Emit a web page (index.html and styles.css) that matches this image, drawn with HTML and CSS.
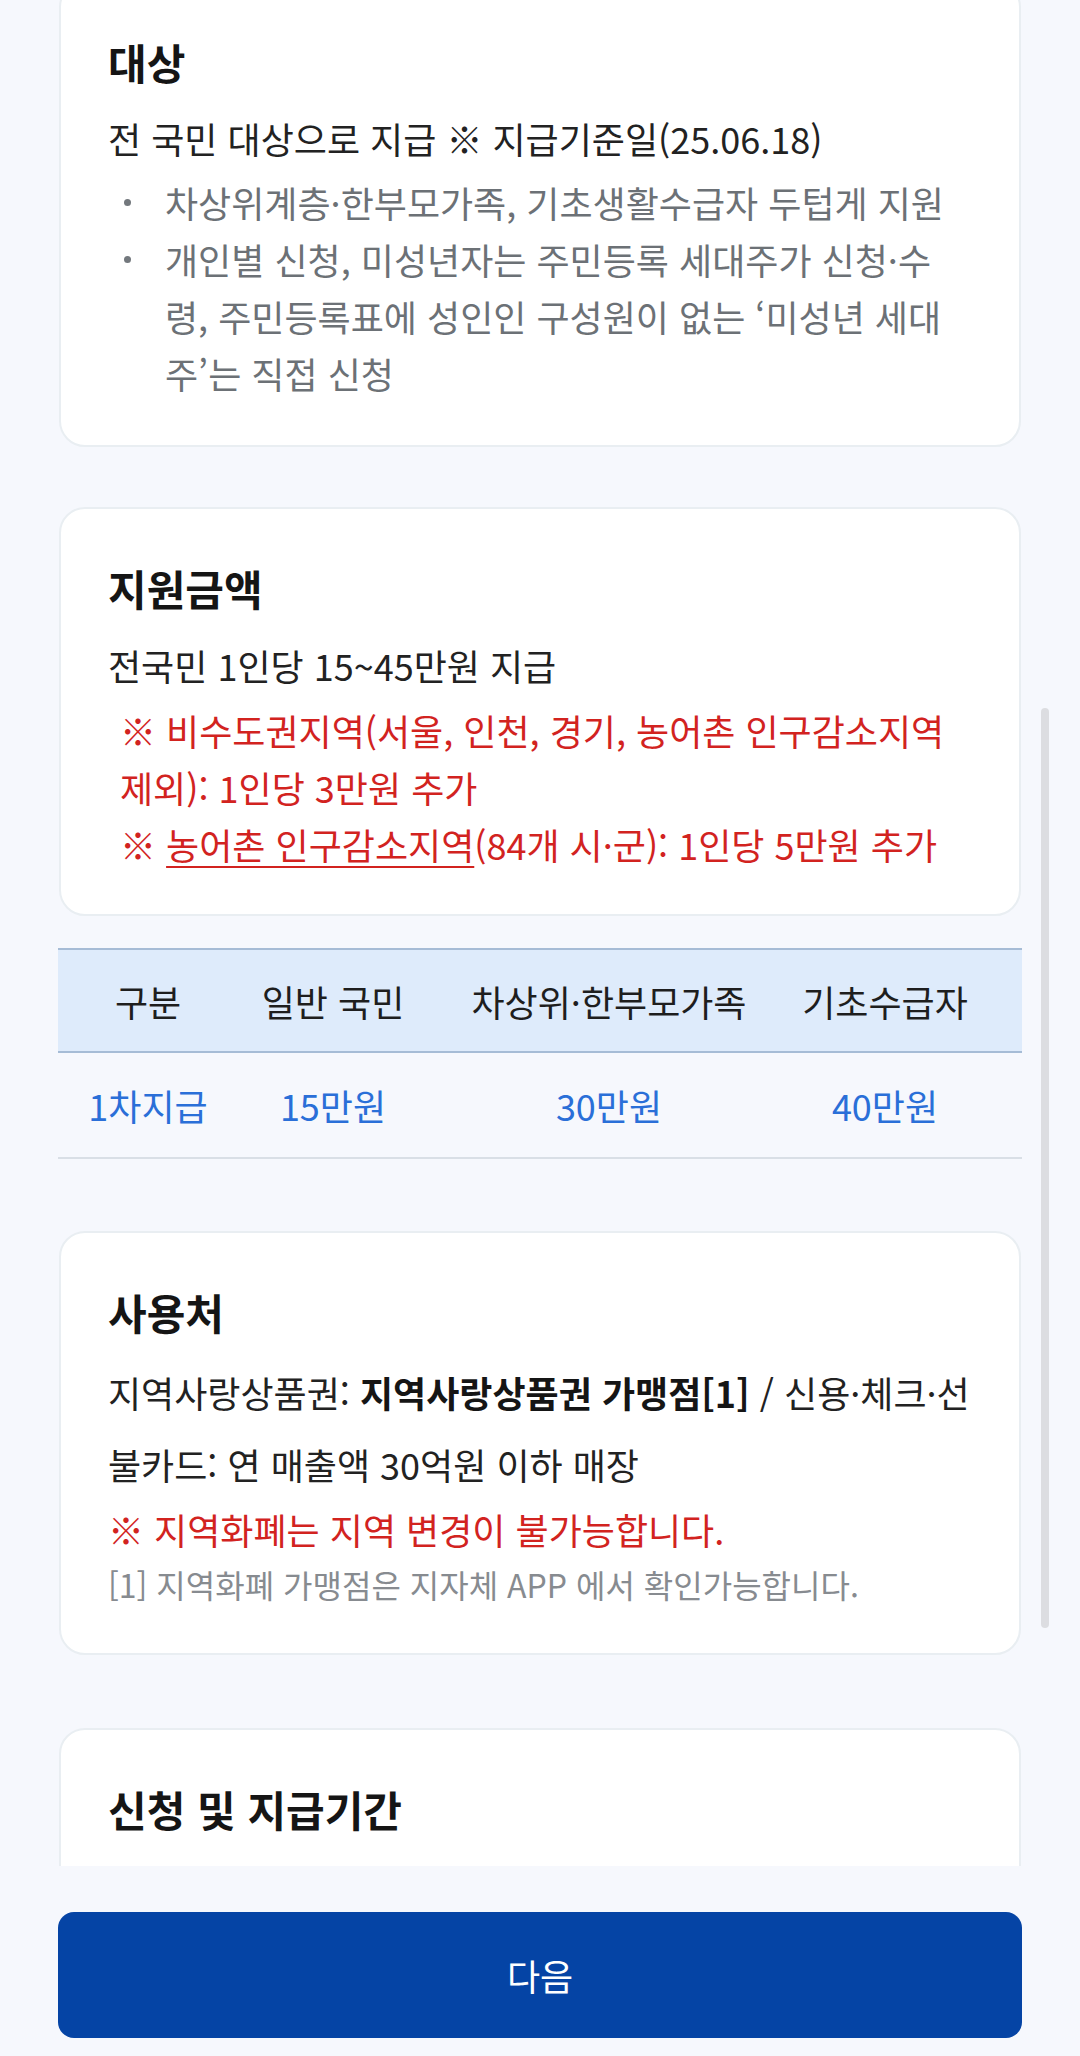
FILE: index.html
```html
<!DOCTYPE html>
<html lang="ko">
<head>
<meta charset="utf-8">
<title>지원 안내</title>
<link rel="stylesheet" href="styles.css">
</head>
<body>
<div class="screen">
  <div class="viewport">
    <div class="content">
      <section class="card card-first">
        <h2 class="card-title">대상</h2>
        <p class="text text-lead">전 국민 대상으로 지급 ※ 지급기준일(25.06.18)</p>
        <ul class="bullets">
          <li>차상위계층·한부모가족, 기초생활수급자 두텁게 지원</li>
          <li>개인별 신청, 미성년자는 주민등록 세대주가 신청·수령, 주민등록표에 성인인 구성원이 없는 ‘미성년 세대주’는 직접 신청</li>
        </ul>
      </section>

      <section class="card card-amount">
        <h2 class="card-title">지원금액</h2>
        <p class="text text-lead">전국민 1인당 15~45만원 지급</p>
        <div class="notes">
          <p class="note">※ 비수도권지역(서울, 인천, 경기, 농어촌 인구감소지역 제외): 1인당 3만원 추가</p>
          <p class="note">※ <span class="underline">농어촌 인구감소지역</span>(84개 시·군): 1인당 5만원 추가</p>
        </div>
      </section>

      <div class="table">
        <div class="row row-head">
          <div class="cell">구분</div>
          <div class="cell">일반 국민</div>
          <div class="cell">차상위·한부모가족</div>
          <div class="cell">기초수급자</div>
        </div>
        <div class="row row-data">
          <div class="cell">1차지급</div>
          <div class="cell">15만원</div>
          <div class="cell">30만원</div>
          <div class="cell">40만원</div>
        </div>
      </div>

      <section class="card card-use">
        <h2 class="card-title">사용처</h2>
        <p class="text text-use">지역사랑상품권: <strong>지역사랑상품권 가맹점[1]</strong> / 신용·체크·선불카드: 연 매출액 30억원 이하 매장</p>
        <p class="warn">※ 지역화폐는 지역 변경이 불가능합니다.</p>
        <p class="foot">[1] 지역화폐 가맹점은 지자체 APP 에서 확인가능합니다.</p>
      </section>

      <section class="card card-period">
        <h2 class="card-title">신청 및 지급기간</h2>
      </section>
    </div>
    <div class="scrollbar"></div>
  </div>
  <div class="footer">
    <button class="next-btn" type="button">다음</button>
  </div>
</div>
</body>
</html>
```

FILE: styles.css
```css
* {
  box-sizing: border-box;
}

html, body {
  margin: 0;
  padding: 0;
  background: #f6f8fd;
}

body {
  font-family: "Noto Sans CJK KR", "Noto Sans", sans-serif;
  color: #1f1f1f;
}

.screen {
  width: 1080px;
  height: 2056px;
  display: flex;
  flex-direction: column;
  background: #f6f8fd;
}

.viewport {
  position: relative;
  height: 1866px;
  overflow: hidden;
  flex: none;
}

.content {
  margin-top: -19px;
  padding: 0 58px;
  display: flex;
  flex-direction: column;
}

.card {
  margin: 0 1px;
  background: #ffffff;
  border: 2px solid #e9eef2;
  border-radius: 26px;
  padding: 55px 50px 43px 47px;
  display: flex;
  flex-direction: column;
}

.card-amount {
  margin-top: 60px;
  padding-bottom: 41px;
}

.card-use {
  margin-top: 72px;
  padding-right: 40px;
}

.card-period {
  margin-top: 73px;
  padding-bottom: 200px;
}

.card-title {
  margin: 0;
  font-size: 42px;
  line-height: 48px;
  font-weight: 700;
  color: #151515;
}

.text {
  margin: 0;
  font-size: 36px;
  line-height: 57px;
  color: #222222;
}

.text-lead {
  margin-top: 24px;
}

.card-amount .text-lead {
  margin-top: 25px;
}

.bullets {
  list-style: none;
  margin: 7px 0 0 0;
  padding: 0;
}

.bullets li {
  display: grid;
  grid-template-columns: 57px 1fr;
  font-size: 36px;
  line-height: 57px;
  color: #6c7176;
}

.bullets li::before {
  content: "";
  width: 7px;
  height: 7px;
  border-radius: 50%;
  background: #73787d;
  margin: 25px 0 0 16px;
}

.notes {
  margin-top: 8px;
  padding-left: 12px;
}

.note {
  margin: 0;
  font-size: 36px;
  line-height: 57px;
  color: #d2231f;
}

.underline {
  text-decoration: underline;
  text-decoration-thickness: 2px;
  text-underline-offset: 6px;
}

.table {
  margin-top: 32px;
  display: flex;
  flex-direction: column;
}

.row {
  display: grid;
  grid-template-columns: 180px 190px 362px 190px;
  padding-right: 42px;
  align-items: center;
  font-size: 36px;
}

.row-head {
  height: 105px;
  background: #deebfb;
  border-top: 2px solid #a6bcd6;
  border-bottom: 2px solid #a6bcd6;
  color: #1e1e1e;
}

.row-data {
  height: 106px;
  border-bottom: 2px solid #d9dfe6;
  color: #2a6fd8;
}

.cell {
  text-align: center;
  white-space: nowrap;
}

.text-use {
  margin-top: 20px;
  line-height: 72px;
}

.text-use strong {
  font-weight: 700;
  color: #151515;
}

.warn {
  margin: 1px 0 0 0;
  font-size: 36px;
  line-height: 57px;
  color: #d2231f;
}

.foot {
  margin: 0;
  font-size: 32px;
  line-height: 52px;
  color: #878b90;
}

.scrollbar {
  position: absolute;
  top: 708px;
  right: 31px;
  width: 8px;
  height: 920px;
  border-radius: 4px;
  background: #dcdde1;
}

.footer {
  flex: 1;
  padding: 46px 58px 0 58px;
  background: #f6f8fd;
}

.next-btn {
  display: block;
  width: 100%;
  height: 126px;
  border: none;
  border-radius: 16px;
  background: #0544a5;
  color: #ffffff;
  font-family: "Noto Sans CJK KR", "Noto Sans", sans-serif;
  font-size: 36px;
  font-weight: 400;
}
```
